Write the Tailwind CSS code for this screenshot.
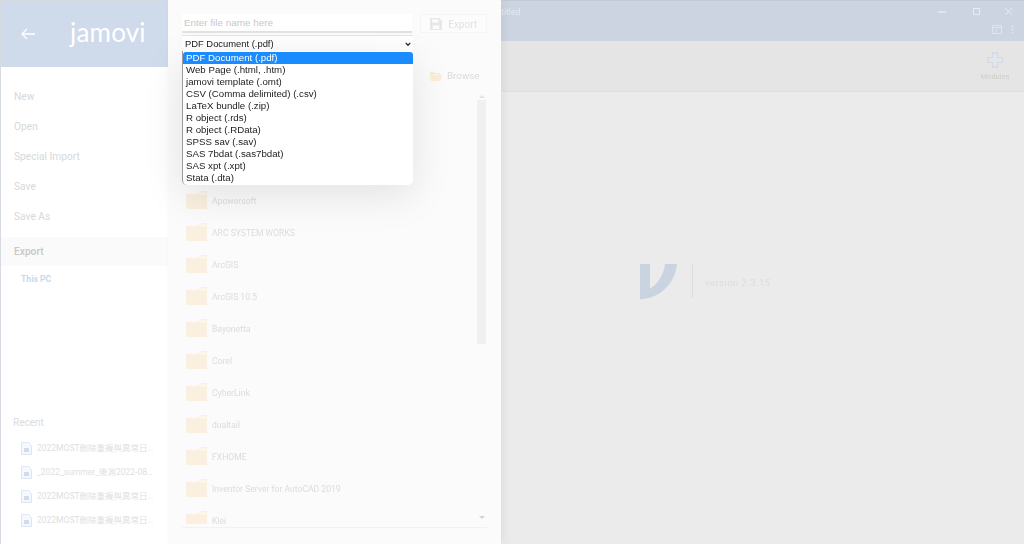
<!DOCTYPE html>
<html><head><meta charset="utf-8"><script src="https://cdn.jsdelivr.net/npm/@tailwindcss/browser@4"></script></head>
<body class="m-0 overflow-hidden bg-[#ebebeb]">
<div class="relative flex h-[544px] w-[1024px] overflow-hidden font-['Roboto','Noto_Sans_CJK_TC',sans-serif] blur-[0.3px]">
  <!-- left nav -->
  <aside class="flex h-full w-[168px] shrink-0 flex-col border-l border-t border-[#d6dbe2] bg-white">
    <div class="flex h-[66px] shrink-0 items-center bg-[#cfdaea] pl-[20px]">
      <svg width="14" height="12" viewBox="0 0 14 12" fill="none" stroke="#fff" stroke-width="1.3"><path d="M14 6H1M6 1 1 6l5 5"/></svg>
      <span class="ml-[35px] mt-[-4px] font-['Lato',sans-serif] text-[26px] leading-none font-normal tracking-[0.2px] text-white">jamovi</span>
    </div>
    <nav class="flex flex-col pt-[15px] text-[10.2px] text-[#d8d8d8]">
      <div class="flex h-[30px] items-center pl-[13px]">New</div>
      <div class="flex h-[30px] items-center pl-[13px]">Open</div>
      <div class="flex h-[30px] items-center pl-[13px]">Special Import</div>
      <div class="flex h-[30px] items-center pl-[13px]">Save</div>
      <div class="flex h-[30px] items-center pl-[13px]">Save As</div>
      <div class="mt-[5px] flex h-[29px] items-center bg-[#fafafa] pl-[13px] pt-px font-medium text-[#c8c8c8]">Export</div>
      <div class="flex h-[25px] items-center pl-[20px] pt-px text-[8.6px] font-bold text-[#c9d8ec]">This PC</div>
    </nav>
    <div class="mt-auto pb-[12px]">
      <div class="pb-[6px] pl-[12px] text-[10px] text-[#dcdcdc]">Recent</div>
      <div class="flex flex-col text-[8.5px] text-[#e0e0e0]">
        <div class="flex h-[24px] items-center pl-[20px]"><svg width="11" height="13" viewBox="0 0 11 13"><path d="M.5.5h7l3 3v9H.5z" fill="#f5f8fc" stroke="#dde6f2"/><path d="M3 6h5v4H3z" fill="#cfdcec"/></svg><span class="ml-[5px] w-[117px] truncate">2022MOST刪除重複與異常日期資料</span></div>
        <div class="flex h-[24px] items-center pl-[20px]"><svg width="11" height="13" viewBox="0 0 11 13"><path d="M.5.5h7l3 3v9H.5z" fill="#f5f8fc" stroke="#dde6f2"/><path d="M3 6h5v4H3z" fill="#cfdcec"/></svg><span class="ml-[5px] w-[117px] truncate">_2022_summer_後測2022-08-15</span></div>
        <div class="flex h-[24px] items-center pl-[20px]"><svg width="11" height="13" viewBox="0 0 11 13"><path d="M.5.5h7l3 3v9H.5z" fill="#f5f8fc" stroke="#dde6f2"/><path d="M3 6h5v4H3z" fill="#cfdcec"/></svg><span class="ml-[5px] w-[117px] truncate">2022MOST刪除重複與異常日期資料</span></div>
        <div class="flex h-[24px] items-center pl-[20px]"><svg width="11" height="13" viewBox="0 0 11 13"><path d="M.5.5h7l3 3v9H.5z" fill="#f5f8fc" stroke="#dde6f2"/><path d="M3 6h5v4H3z" fill="#cfdcec"/></svg><span class="ml-[5px] w-[117px] truncate">2022MOST刪除重複與異常日期資料</span></div>
      </div>
    </div>
  </aside>

  <!-- export panel -->
  <section class="relative z-10 flex h-full w-[333px] shrink-0 flex-col bg-[#fbfbfb] px-[14px] pt-[14px] shadow-[3px_0_8px_rgba(0,0,0,0.05)]">
    <div class="flex shrink-0 gap-[8px]">
      <div class="flex h-[19px] w-[231px] items-center border-b-2 border-[#e2e2e2] bg-white pl-[2px] pt-px font-['Liberation_Sans',sans-serif] text-[9.9px] text-[#c8c8c8]">Enter file name here</div>
      <div class="flex h-[19px] w-[67px] items-center border border-[#f5f5f5] bg-[#fcfcfc] pl-[9px] pt-px text-[10px] text-[#e2e2e2]">
        <svg width="12" height="12" viewBox="0 0 13 13" fill="#e8e8e8"><path d="M0 0h10l3 3v10H0zM2.500 1.500v3.500h6.500V1.500zM3 8v4h7V8z" fill-rule="evenodd"/></svg>
        <span class="ml-[6px]">Export</span>
      </div>
    </div>
    <div class="mt-[2px] flex h-[17px] w-[231px] shrink-0 items-center border-t border-[#e4e4e4] bg-white pl-[3px] pr-[2px] font-['Liberation_Sans',sans-serif] text-[9.4px] text-[#222]">
      <span>PDF Document (.pdf)</span>
      <svg class="ml-auto" width="6" height="5" viewBox="0 0 8 6" fill="none" stroke="#333" stroke-width="1.800"><path d="M1 1l3 3 3-3"/></svg>
    </div>
    <div class="flex h-[37px] shrink-0 items-end justify-end pb-[5px] pr-[8px] text-[9.8px] text-[#dadada]">
      <svg class="mb-[3px]" width="15" height="10" viewBox="0 0 15 12"><path d="M0 1h5l1 1.500h6V4H3L0 11z" fill="#f8ebd0"/><path d="M3 4.500h12L12 12H0z" fill="#fbeed4"/></svg>
      <span class="ml-[3px] w-[32px]">Browse</span>
    </div>
    <div class="flex h-[435px] shrink-0 justify-between overflow-hidden pr-[1px]">
      <ul class="h-[435px] overflow-hidden pl-[4px] pt-[96px] text-[8.6px] text-[#dcdcdc]">
        <li class="flex h-[32px] items-center gap-[5px]"><svg class="-translate-y-px" width="21" height="18" viewBox="0 0 21 18"><path d="M0 3h12l3-3h6v18H0z" fill="#fbf0df"/><path d="M13 3.500l2.500-2H20v2z" fill="#fff8ee"/></svg>Apowersoft</li>
        <li class="flex h-[32px] items-center gap-[5px]"><svg class="-translate-y-px" width="21" height="18" viewBox="0 0 21 18"><path d="M0 3h12l3-3h6v18H0z" fill="#fbf0df"/><path d="M13 3.500l2.500-2H20v2z" fill="#fff8ee"/></svg>ARC SYSTEM WORKS</li>
        <li class="flex h-[32px] items-center gap-[5px]"><svg class="-translate-y-px" width="21" height="18" viewBox="0 0 21 18"><path d="M0 3h12l3-3h6v18H0z" fill="#fbf0df"/><path d="M13 3.500l2.500-2H20v2z" fill="#fff8ee"/></svg>ArcGIS</li>
        <li class="flex h-[32px] items-center gap-[5px]"><svg class="-translate-y-px" width="21" height="18" viewBox="0 0 21 18"><path d="M0 3h12l3-3h6v18H0z" fill="#fbf0df"/><path d="M13 3.500l2.500-2H20v2z" fill="#fff8ee"/></svg>ArcGIS 10.5</li>
        <li class="flex h-[32px] items-center gap-[5px]"><svg class="-translate-y-px" width="21" height="18" viewBox="0 0 21 18"><path d="M0 3h12l3-3h6v18H0z" fill="#fbf0df"/><path d="M13 3.500l2.500-2H20v2z" fill="#fff8ee"/></svg>Bayonetta</li>
        <li class="flex h-[32px] items-center gap-[5px]"><svg class="-translate-y-px" width="21" height="18" viewBox="0 0 21 18"><path d="M0 3h12l3-3h6v18H0z" fill="#fbf0df"/><path d="M13 3.500l2.500-2H20v2z" fill="#fff8ee"/></svg>Corel</li>
        <li class="flex h-[32px] items-center gap-[5px]"><svg class="-translate-y-px" width="21" height="18" viewBox="0 0 21 18"><path d="M0 3h12l3-3h6v18H0z" fill="#fbf0df"/><path d="M13 3.500l2.500-2H20v2z" fill="#fff8ee"/></svg>CyberLink</li>
        <li class="flex h-[32px] items-center gap-[5px]"><svg class="-translate-y-px" width="21" height="18" viewBox="0 0 21 18"><path d="M0 3h12l3-3h6v18H0z" fill="#fbf0df"/><path d="M13 3.500l2.500-2H20v2z" fill="#fff8ee"/></svg>dualtail</li>
        <li class="flex h-[32px] items-center gap-[5px]"><svg class="-translate-y-px" width="21" height="18" viewBox="0 0 21 18"><path d="M0 3h12l3-3h6v18H0z" fill="#fbf0df"/><path d="M13 3.500l2.500-2H20v2z" fill="#fff8ee"/></svg>FXHOME</li>
        <li class="flex h-[32px] items-center gap-[5px]"><svg class="-translate-y-px" width="21" height="18" viewBox="0 0 21 18"><path d="M0 3h12l3-3h6v18H0z" fill="#fbf0df"/><path d="M13 3.500l2.500-2H20v2z" fill="#fff8ee"/></svg>Inventor Server for AutoCAD 2019</li>
        <li class="flex h-[19px] items-start gap-[5px] overflow-hidden pt-[6px]"><svg class="shrink-0" width="21" height="18" viewBox="0 0 21 18"><path d="M0 3h12l3-3h6v18H0z" fill="#fbf0df"/><path d="M13 3.500l2.500-2H20v2z" fill="#fff8ee"/></svg><span class="leading-[20px]">Klei</span></li>
      </ul>
      <div class="flex w-[9px] flex-col items-center pt-[6px]">
        <svg width="6" height="3" viewBox="0 0 6 3" fill="#e4e4e4"><path d="M3 0l3 3H0z"/></svg>
        <div class="mt-[2px] h-[244px] w-[9px] bg-[#f0f0f0]"></div>
        <svg class="mt-[172px]" width="6" height="3" viewBox="0 0 6 3" fill="#d4d4d4"><path d="M0 0h6L3 3z"/></svg>
      </div>
    </div>
    <div class="mt-[3px] h-px shrink-0 bg-[#f2f2f2]"></div>
    <!-- open select list -->
    <ul class="absolute left-[14px] top-[51px] z-20 h-[134px] w-[231px] overflow-hidden rounded-b-[5px] border-l border-[#9a9a9a] bg-white pt-px font-['Liberation_Sans',sans-serif] text-[9.7px] leading-[11px] text-[#222] shadow-[0_10px_40px_rgba(0,0,0,0.1)]">
      <li class="h-[12px] rounded-t-[3px] bg-[#1a8cff] pl-[3px] text-white">PDF Document (.pdf)</li>
      <li class="h-[12px] pl-[3px]">Web Page (.html, .htm)</li>
      <li class="h-[12px] pl-[3px]">jamovi template (.omt)</li>
      <li class="h-[12px] pl-[3px]">CSV (Comma delimited) (.csv)</li>
      <li class="h-[12px] pl-[3px]">LaTeX bundle (.zip)</li>
      <li class="h-[12px] pl-[3px]">R object (.rds)</li>
      <li class="h-[12px] pl-[3px]">R object (.RData)</li>
      <li class="h-[12px] pl-[3px]">SPSS sav (.sav)</li>
      <li class="h-[12px] pl-[3px]">SAS 7bdat (.sas7bdat)</li>
      <li class="h-[12px] pl-[3px]">SAS xpt (.xpt)</li>
      <li class="h-[12px] pl-[3px]">Stata (.dta)</li>
    </ul>
  </section>

  <!-- main window -->
  <main class="flex min-w-0 flex-1 flex-col">
    <header class="flex h-[41px] shrink-0 flex-col border-t border-[#c2cbd7] bg-[#cbd4e0]">
      <div class="flex h-[21px] items-center">
        <span class="-ml-[10px] pt-[2px] text-[8.5px] text-[#e4e9f0]">Untitled</span>
        <div class="ml-auto flex items-center pr-[12px]">
          <svg width="8" height="2" viewBox="0 0 8 2"><path d="M0 1h8" stroke="#f4f6f9" stroke-width="1"/></svg>
          <svg class="ml-[27px]" width="7" height="7" viewBox="0 0 7 7" fill="none" stroke="#e9edf3"><path d="M.5.500h6v6h-6z"/></svg>
          <svg class="ml-[25px]" width="7" height="7" viewBox="0 0 7 7" fill="none" stroke="#e9edf3" stroke-width="0.900"><path d="M0 0l7 7M7 0L0 7"/></svg>
        </div>
      </div>
      <div class="flex h-[18px] items-start justify-end pr-[10px] pt-[3px]">
        <svg width="10" height="9" viewBox="0 0 10 9" fill="none" stroke="#dfe5ec"><path d="M.5.500h9v8h-9zM.5 2.500h9"/><path d="M5 4L3 5.500 5 7" stroke="#dfe5ec"/></svg>
        <svg class="ml-[9px]" width="3" height="9" viewBox="0 0 3 9" fill="#dfe5ec"><circle cx="1.500" cy="1.200" r="1"/><circle cx="1.500" cy="4.500" r="1"/><circle cx="1.500" cy="7.800" r="1"/></svg>
      </div>
    </header>
    <div class="flex h-[51px] shrink-0 flex-col items-end border-b border-[#e0e0e0] bg-[#e5e5e5] pr-[14px] pt-[11px]">
      <div class="flex w-[30px] flex-col items-center">
        <svg width="16" height="16" viewBox="0 0 16 16" fill="none" stroke="#cfdaea" stroke-width="1.200"><path d="M5.500.6h5v4.900h4.900v5h-4.900v4.900h-5v-4.900H.6v-5h4.900z"/></svg>
        <span class="mt-[4px] text-[7.500px] leading-[10px] text-[#cdcdcd]">Modules</span>
      </div>
    </div>
    <div class="flex flex-1 items-start bg-[#ebebeb] pl-[139px] pt-[172px]">
      <svg width="37" height="36" viewBox="0 0 37 36" fill="#cad4e1"><path d="M0 0h10v24.500C18 20 24 10 25 0h12C35 20 20 34 0 35.500z"/></svg>
      <div class="ml-[15px] h-[34px] w-px bg-[#dcdcdc]"></div>
      <span class="ml-[12px] mt-[12px] text-[9.6px] tracking-[0.4px] text-[#dcdcdc]">version 2.3.15</span>
    </div>
  </main>
</div>
</body></html>
